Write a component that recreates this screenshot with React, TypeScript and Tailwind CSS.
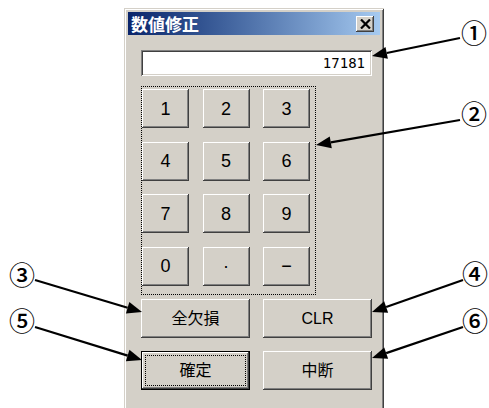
import React from 'react';

const raised =
  'bg-[#d4d0c8] shadow-[inset_-1px_-1px_#404040,inset_1px_1px_#ffffff,inset_-2px_-2px_#808080,inset_2px_2px_#d4d0c8]';

const KeyButton: React.FC<{ label: string }> = ({ label }) => (
  <div
    className={`${raised} w-[47px] h-[39px] flex items-center justify-center text-[18px] leading-none text-black font-['Liberation_Sans',sans-serif]`}
  >
    {label}
  </div>
);

const WideButton: React.FC<{ label: string; isDefault?: boolean }> = ({ label, isDefault }) => {
  if (isDefault) {
    return (
      <div className="w-[109px] h-[39px] border border-black">
        <div className={`${raised} w-full h-full p-[3px]`}>
          <div className="w-full h-full border border-dotted border-black flex items-center justify-center text-[16px] leading-none text-black font-['Liberation_Sans','Noto_Sans_CJK_JP',sans-serif]">
            {label}
          </div>
        </div>
      </div>
    );
  }
  return (
    <div
      className={`${raised} w-[109px] h-[39px] flex items-center justify-center text-[16px] leading-none text-black font-['Liberation_Sans','Noto_Sans_CJK_JP',sans-serif]`}
    >
      {label}
    </div>
  );
};

type Note = { n: string; cx: number; cy: number; from: [number, number]; to: [number, number] };

const notes: Note[] = [
  { n: '①', cx: 474, cy: 32, from: [460, 38], to: [372, 56] },
  { n: '②', cx: 474, cy: 113, from: [460, 120], to: [316, 145] },
  { n: '③', cx: 22, cy: 274, from: [35, 280], to: [142, 312] },
  { n: '④', cx: 475, cy: 273, from: [463, 280], to: [372, 312] },
  { n: '⑤', cx: 22, cy: 320, from: [35, 327], to: [142, 360] },
  { n: '⑥', cx: 475, cy: 320, from: [463, 327], to: [372, 358] },
];

// arrow shaft ends where the head starts
function arrowParts(from: [number, number], to: [number, number]) {
  const [x1, y1] = from;
  const [x2, y2] = to;
  const dx = x2 - x1;
  const dy = y2 - y1;
  const len = Math.hypot(dx, dy);
  const ux = dx / len;
  const uy = dy / len;
  const headLen = 15;
  const half = 6;
  const bx = x2 - ux * headLen;
  const by = y2 - uy * headLen;
  const pts = `${x2},${y2} ${bx - uy * half},${by + ux * half} ${bx + uy * half},${by - ux * half}`;
  return { bx, by, pts };
}

const App: React.FC = () => {
  const keys = ['1', '2', '3', '4', '5', '6', '7', '8', '9', '0', '·', '−'];

  return (
    <div className="relative w-[489px] h-[408px] overflow-hidden bg-white">
      {/* dialog window */}
      <div className="ml-[124px] mt-[8px] w-[260px] h-[420px] p-[4px] bg-[#d4d0c8] shadow-[inset_1px_1px_#d4d0c8,inset_-1px_-1px_#404040,inset_2px_2px_#ffffff,inset_-2px_-2px_#808080]">
        {/* title bar */}
        <div className="h-[23px] flex items-center justify-between pl-[3px] pr-[6px] bg-linear-to-r from-[#0a246a] to-[#a6caf0]">
          <span className="text-white font-bold text-[17px] leading-none font-['Noto_Sans_CJK_JP',sans-serif]">
            数値修正
          </span>
          <div className={`${raised} w-[18px] h-[16px] flex items-center justify-center`}>
            <svg width="11" height="10" viewBox="0 0 11 10">
              <path d="M1 0.5 L10 9.5 M10 0.5 L1 9.5" stroke="#000" strokeWidth="2.2" />
            </svg>
          </div>
        </div>

        <div className="pl-[13px] pt-[15px]">
          {/* value field */}
          <div className="w-[231px] h-[26px] bg-white shadow-[inset_1px_1px_#808080,inset_-1px_-1px_#ffffff,inset_2px_2px_#404040,inset_-2px_-2px_#d4d0c8] flex items-center justify-end pr-[7px] text-[14px] leading-none text-black font-['DejaVu_Sans_Mono',monospace]">
            17181
          </div>

          {/* keypad */}
          <div className="mt-[10px] w-[175px] h-[209px] border border-dotted border-black pt-[2px]">
            <div className="grid grid-cols-[47px_47px_47px] gap-x-[13.5px] gap-y-[13.5px]">
              {keys.map((k) => (
                <KeyButton key={k} label={k} />
              ))}
            </div>
          </div>

          {/* command buttons */}
          <div className="mt-[4px] grid grid-cols-[109px_109px] gap-x-[13px] gap-y-[13px]">
            <WideButton label="全欠損" />
            <WideButton label="CLR" />
            <WideButton label="確定" isDefault />
            <WideButton label="中断" />
          </div>
        </div>
      </div>

      {/* annotation arrows */}
      <svg className="absolute inset-0 pointer-events-none" width="489" height="408">
        {notes.map((a) => {
          const p = arrowParts(a.from, a.to);
          return (
            <g key={a.n}>
              <line x1={a.from[0]} y1={a.from[1]} x2={p.bx} y2={p.by} stroke="#000" strokeWidth="2.2" />
              <polygon points={p.pts} fill="#000" />
            </g>
          );
        })}
      </svg>

      {notes.map((a) => (
        <span
          key={a.n}
          className="absolute w-[26px] h-[28px] flex items-center justify-center text-[26px] leading-none font-medium text-black font-['Noto_Sans_CJK_JP',sans-serif]"
          style={{ left: a.cx - 13, top: a.cy - 14 }}
        >
          {a.n}
        </span>
      ))}
    </div>
  );
};

export default App;
